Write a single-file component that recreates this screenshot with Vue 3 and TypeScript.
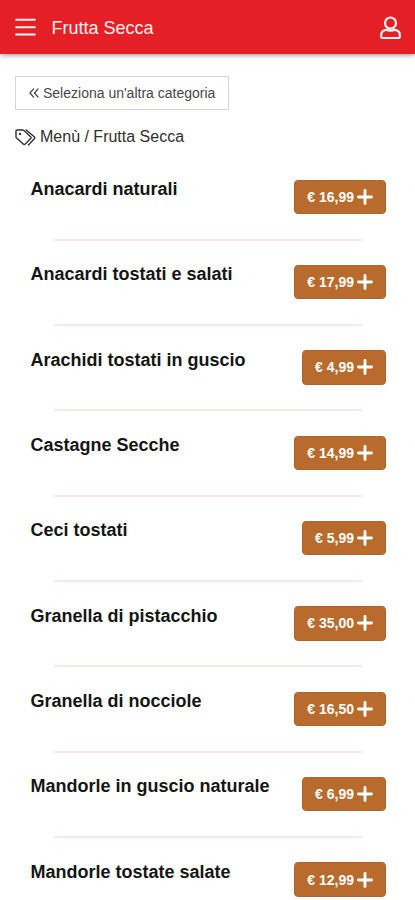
<script setup lang="ts">
interface Product {
  name: string
  price: string
}

const products: Product[] = [
  { name: 'Anacardi naturali', price: '16,99' },
  { name: 'Anacardi tostati e salati', price: '17,99' },
  { name: 'Arachidi tostati in guscio', price: '4,99' },
  { name: 'Castagne Secche', price: '14,99' },
  { name: 'Ceci tostati', price: '5,99' },
  { name: 'Granella di pistacchio', price: '35,00' },
  { name: 'Granella di nocciole', price: '16,50' },
  { name: 'Mandorle in guscio naturale', price: '6,99' },
  { name: 'Mandorle tostate salate', price: '12,99' },
]
</script>

<template>
  <div class="page">
    <header class="topbar">
      <svg class="menu-icon" viewBox="0 0 21 18" aria-hidden="true">
        <path d="M1.2 1.7H19.8M1.2 9.2H19.8M1.2 16.5H19.8" />
      </svg>
      <h1 class="title">Frutta Secca</h1>
      <svg class="user-icon" viewBox="0 0 21 24" aria-hidden="true">
        <ellipse cx="10.5" cy="7.1" rx="5.5" ry="5.6" />
        <path d="M6.2 13.8C3.2 14.2 1.2 16.3 1.2 19V20.4Q1.2 22 2.9 22H18.1Q19.8 22 19.8 20.4V19C19.8 16.3 17.8 14.2 14.8 13.8C12.8 14.9 8.2 14.9 6.2 13.8Z" />
      </svg>
    </header>

    <main class="content">
      <button class="back" type="button">
        <svg class="chevrons" viewBox="0 0 10 10" aria-hidden="true">
          <path d="M4.6 .9L1 5L4.6 9.1M9.1 .9L5.5 5L9.1 9.1" />
        </svg>
        <span>Seleziona un'altra categoria</span>
      </button>

      <nav class="crumbs">
        <svg class="tags" viewBox="0 0 21 17" aria-hidden="true">
          <path d="M1 2.2Q1 1 2.2 1H7.6Q8.4 1 9 1.6L15.6 7.7Q16.6 8.6 15.6 9.6L10.3 15Q9.3 16 8.2 15L1.6 9.1Q1 8.5 1 7.7Z" />
          <path d="M11.2 1L19.2 7.7Q20.3 8.7 19.3 9.8L13.4 15.9" />
          <circle class="hole" cx="5" cy="4.9" r="1.2" />
        </svg>
        <span>Menù / Frutta Secca</span>
      </nav>

      <ul class="list">
        <li v-for="product in products" :key="product.name" class="item">
          <h2 class="name">{{ product.name }}</h2>
          <button class="price" type="button">
            <span>€ {{ product.price }}</span>
            <svg class="plus" viewBox="0 0 16 16" aria-hidden="true">
              <path d="M8 1.5V14.5M1.5 8H14.5" />
            </svg>
          </button>
        </li>
      </ul>
    </main>
  </div>
</template>

<style>
body {
  background: #fff;
  overflow: hidden;
}
</style>

<style scoped>
.page {
  height: 900px;
  overflow: hidden;
  background: #fff;
  font-family: 'Liberation Sans', Arial, sans-serif;
}
.topbar {
  box-sizing: border-box;
  height: 54px;
  display: flex;
  align-items: center;
  padding: 0 14px 0 15px;
  background: #e51f26;
  box-shadow: 0 1px 5px rgba(0, 0, 0, 0.45);
  color: #fff2f0;
}
svg {
  flex: none;
  fill: none;
  stroke: currentColor;
  stroke-linecap: round;
  stroke-linejoin: round;
}
.menu-icon {
  width: 21px;
  height: 18px;
  stroke-width: 2.1;
}
.title {
  flex: 1;
  margin: 1px 0 0 15.5px;
  font-size: 18px;
  font-weight: 400;
  line-height: 22px;
}
.user-icon {
  width: 21px;
  height: 24px;
  margin-top: 2px;
  stroke-width: 2.2;
}
.content {
  padding: 22px 15px 0;
}
.back {
  box-sizing: border-box;
  display: flex;
  align-items: center;
  width: 214px;
  height: 34px;
  padding: 0 0 1px 13px;
  border: 1px solid #d6d6d6;
  background: #fff;
  color: #484848;
  font: 14px 'Liberation Sans', Arial, sans-serif;
  white-space: nowrap;
}
.chevrons {
  width: 10px;
  height: 10px;
  margin-right: 4px;
  stroke-width: 1.3;
}
.crumbs {
  display: flex;
  align-items: center;
  height: 20px;
  margin-top: 17px;
  color: #303030;
  font-size: 16px;
  line-height: 20px;
}
.tags {
  width: 21px;
  height: 17px;
  margin-right: 4px;
  stroke-width: 1.4;
}
.hole {
  fill: currentColor;
  stroke: none;
}
.list {
  margin: 0;
  padding: 32.5px 14px 0 15.5px;
  list-style: none;
}
.item {
  box-sizing: border-box;
  height: 85.35px;
  display: grid;
  grid-template-columns: 1fr auto;
  grid-template-rows: 35px 2px;
  row-gap: 24px;
  align-items: start;
}
.item::after {
  content: '';
  grid-column: 1 / -1;
  height: 2px;
  margin: 0 24px 0 23.5px;
  background: #fbe6e8;
}
.name {
  margin: -0.5px 0 0;
  color: #151515;
  font-size: 18px;
  font-weight: 700;
  line-height: 20px;
  white-space: nowrap;
}
.price {
  box-sizing: border-box;
  display: flex;
  align-items: center;
  height: 34.5px;
  padding: 0 12px;
  border: 1px solid #a9652a;
  border-radius: 4px;
  background: #b96b2d;
  color: #fff;
  font: 700 14px 'Liberation Sans', Arial, sans-serif;
  white-space: nowrap;
}
.plus {
  width: 16px;
  height: 16px;
  margin-left: 3px;
  stroke-width: 2.9;
}
</style>
